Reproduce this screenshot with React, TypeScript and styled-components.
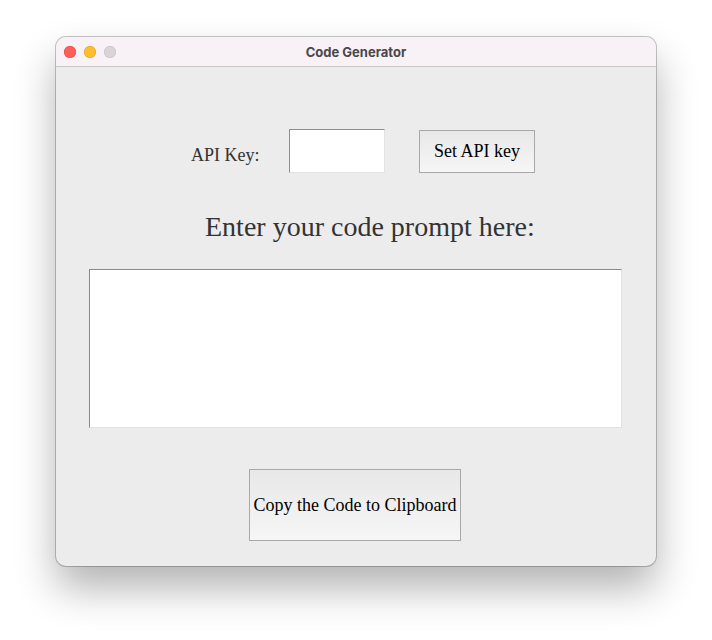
import styled, { createGlobalStyle } from "styled-components";

const Global = createGlobalStyle`
  html, body {
    margin: 0;
    padding: 0;
    background: #ffffff;
  }
  #root {
    width: 712px;
    height: 640px;
    overflow: hidden;
  }
`;

const Page = styled.div`
  padding: 37px 0 0 56px;
`;

const Window = styled.div`
  width: 600px;
  height: 529px;
  border-radius: 10px;
  background: #ececec;
  box-shadow: 0 0 0 1px rgba(0, 0, 0, 0.22), 0 22px 40px rgba(0, 0, 0, 0.3);
  overflow: hidden;
  display: flex;
  flex-direction: column;
`;

const TitleBar = styled.div`
  height: 29px;
  flex: none;
  background: #f8f1f6;
  border-bottom: 1px solid #c9c6c8;
  display: flex;
  align-items: center;
  position: relative;
  padding-left: 8px;
  gap: 8px;
`;

const Light = styled.span<{ $c: string; $b: string }>`
  width: 12px;
  height: 12px;
  border-radius: 50%;
  background: ${(p) => p.$c};
  box-shadow: inset 0 0 0 0.5px ${(p) => p.$b};
`;

const Title = styled.div`
  position: absolute;
  left: 0;
  right: 0;
  text-align: center;
  font-family: "Inter", "Liberation Sans", sans-serif;
  font-weight: 700;
  font-size: 13px;
  color: #4a474a;
  pointer-events: none;
`;

const Content = styled.div`
  flex: 1;
  display: flex;
  flex-direction: column;
  align-items: flex-start;
  padding-top: 62px;
  font-family: "Liberation Serif", "Times New Roman", serif;
`;

const KeyRow = styled.div`
  display: flex;
  align-items: center;
  margin-left: 135px;
  height: 44px;
`;

const Label = styled.span`
  font-size: 18px;
  color: #333;
  margin-top: 8px;
  width: 98px;
`;

const KeyInput = styled.input`
  box-sizing: border-box;
  width: 96px;
  height: 44px;
  border: none;
  border-top: 1px solid #8e8e8e;
  border-left: 1px solid #8e8e8e;
  border-right: 1px solid #e2e2e2;
  border-bottom: 1px solid #e2e2e2;
  background: #fff;
  outline: none;
  margin-right: 34px;
`;

const Button = styled.button<{ $w: number; $h: number }>`
  box-sizing: border-box;
  width: ${(p) => p.$w}px;
  height: ${(p) => p.$h}px;
  border: 1px solid #a8a8a8;
  background: linear-gradient(#e8e8e8, #f6f6f6);
  font-family: "Liberation Serif", "Times New Roman", serif;
  font-size: 18px;
  color: #000;
  padding: 0;
`;

const Heading = styled.div`
  margin: 36px 0 0 149px;
  font-size: 28px;
  color: #333;
  line-height: 36px;
`;

const Prompt = styled.textarea`
  box-sizing: border-box;
  width: 533px;
  height: 159px;
  margin: 24px 0 0 33px;
  border: none;
  border-top: 1px solid #8a8a8a;
  border-left: 1px solid #8a8a8a;
  border-right: 1px solid #e2e2e2;
  border-bottom: 1px solid #e2e2e2;
  background: #fff;
  resize: none;
  outline: none;
`;

const CopyButton = styled(Button)`
  margin: 41px 0 0 193px;
`;

export default function App() {
  return (
    <Page>
      <Global />
      <Window>
        <TitleBar>
          <Light $c="#fe5f57" $b="#e0443e" />
          <Light $c="#febc2e" $b="#dea123" />
          <Light $c="#d9d4d8" $b="#c4bec3" />
          <Title>Code Generator</Title>
        </TitleBar>
        <Content>
          <KeyRow>
            <Label>API Key:</Label>
            <KeyInput />
            <Button $w={116} $h={43}>Set API key</Button>
          </KeyRow>
          <Heading>Enter your code prompt here:</Heading>
          <Prompt />
          <CopyButton $w={212} $h={72}>Copy the Code to Clipboard</CopyButton>
        </Content>
      </Window>
    </Page>
  );
}
